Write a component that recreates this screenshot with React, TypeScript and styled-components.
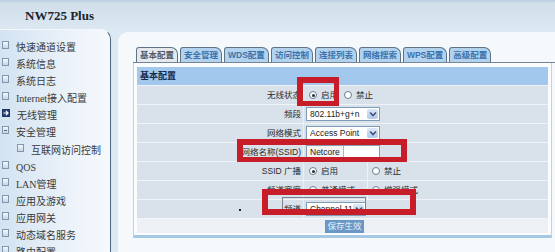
import React from "react";
import styled, { createGlobalStyle, css } from "styled-components";

const GlobalStyle = createGlobalStyle`
  html, body { margin: 0; padding: 0; }
  body {
    width: 555px;
    height: 252px;
    overflow: hidden;
    background: #dce8f2;
    font-family: "Liberation Sans", "Noto Sans CJK SC", sans-serif;
  }
  * { box-sizing: border-box; }
`;

const Page = styled.div`
  position: relative;
  width: 555px;
  height: 252px;
  overflow: hidden;
  background: #dce8f2;
  display: flex;
  flex-direction: column;
`;

const Header = styled.header`
  flex: none;
  height: 29px;
  padding: 9px 0 0 25px;
  background: linear-gradient(#b7cde1 0, #d1dfeb 3px, #dbe7f1 100%);
`;

const Brand = styled.div`
  font: bold 13px/13px "Liberation Serif", serif;
  color: #1b2530;
`;

const Body = styled.div`
  flex: 1;
  min-height: 0;
  display: flex;
  gap: 7px;
`;

const Sidebar = styled.nav`
  flex: none;
  width: 111px;
  padding: 9px 0 0 2px;
  background: linear-gradient(to right, #d3e3f2, #eef4fa 70%, #f6f9fc);
  border-top: 1px solid #f3f7fb;
  border-right: 1px solid #4d6580;
  border-top-right-radius: 10px;
`;

const MenuItem = styled.div<{ $indent?: boolean }>`
  display: flex;
  align-items: flex-start;
  height: 17.1px;
  padding-left: ${(p) => (p.$indent ? "15px" : "0")};
  font: 10px/17px "Liberation Serif", "Noto Sans CJK SC", serif;
  color: #3a3a3a;
  white-space: nowrap;
`;

const MenuIcon = styled.span<{ $kind: "box" | "minus" | "arrow" }>`
  flex: none;
  position: relative;
  width: 7px;
  height: 8px;
  margin: 2px 7px 0 0;
  border: 1px solid #8297ae;
  background: linear-gradient(#f6f9fc, #c4d5e6);
  ${(p) =>
    p.$kind === "minus" &&
    css`
      &::after {
        content: "";
        position: absolute;
        left: 1px;
        right: 1px;
        top: 2.5px;
        height: 1px;
        background: #55687d;
      }
    `}
  ${(p) =>
    p.$kind === "arrow" &&
    css`
      width: 8px;
      height: 8px;
      border-color: #1e3466;
      background: #24417c;
    `}
  svg {
    position: absolute;
    left: 0;
    top: 0;
  }
`;

const Main = styled.main`
  flex: 1;
  margin-top: 3px;
  padding: 15px 0 0 15px;
  background: #f6f9fc;
  border-top-left-radius: 10px;
`;

const TabBar = styled.div`
  display: flex;
  gap: 2px;
  height: 16px;
  padding-left: 3px;
  border-bottom: 1px solid #74879a;
`;

const Tab = styled.div<{ $active?: boolean }>`
  height: 15px;
  padding: 0 3px;
  font: bold 8.5px/14px "Liberation Sans", "Noto Sans CJK SC", sans-serif;
  white-space: nowrap;
  border: 1px solid #5f7387;
  border-bottom: none;
  border-radius: 3px 7px 0 0;
  background: ${(p) => (p.$active ? "#e4e9ee" : "#b3d2ee")};
  color: ${(p) => (p.$active ? "#505a66" : "#3a72ad")};
`;

const Panel = styled.section`
  width: 419px;
  padding: 4px 3px 2px 3px;
  background: #fbfcfd;
  border: 1px solid #c3d2de;
  border-top: none;
  border-bottom: 3px solid #a6c8e2;
`;

const PanelHeader = styled.div`
  height: 18px;
  padding-left: 3px;
  background: #a2c9ed;
  font: bold 9px/18px "Liberation Sans", "Noto Sans CJK SC", sans-serif;
  color: #14284a;
`;

const Row = styled.div`
  display: grid;
  grid-template-columns: 166px 1fr;
  height: 19px;
  border-top: 1px solid #eff3f7;
  background: #d9e2ea;
`;

const Label = styled.div`
  padding-right: 2px;
  text-align: right;
  font: 8.5px/18px "Liberation Sans", "Noto Sans CJK SC", sans-serif;
  color: #2b2b2b;
  white-space: nowrap;
`;

const Value = styled.div`
  display: flex;
  align-items: center;
  padding-left: 2px;
  border-left: 1px solid #e9eff4;
  font: 8.5px/18px "Liberation Sans", "Noto Sans CJK SC", sans-serif;
  color: #2b2b2b;
  white-space: nowrap;
`;

const SplitCell = styled.div<{ $width?: number; $divider?: boolean }>`
  display: flex;
  align-items: center;
  height: 100%;
  width: ${(p) => (p.$width ? `${p.$width}px` : "auto")};
  flex: ${(p) => (p.$width ? "none" : "1")};
  padding-left: ${(p) => (p.$divider ? "1px" : "0")};
  border-left: ${(p) => (p.$divider ? "1px solid #eff3f7" : "none")};
`;

const Radio = styled.span<{ $checked?: boolean }>`
  position: relative;
  flex: none;
  width: 8px;
  height: 8px;
  margin-left: 3px;
  border: 1px solid #6b7d90;
  border-radius: 50%;
  background: #fff;
  ${(p) =>
    p.$checked &&
    css`
      &::after {
        content: "";
        position: absolute;
        left: 1.5px;
        top: 1.5px;
        width: 3px;
        height: 3px;
        border-radius: 50%;
        background: #2a2a2a;
      }
    `}
`;

const RadioText = styled.span`
  margin: 0 3px 0 4px;
`;

const Select = styled.div<{ $width: number }>`
  display: flex;
  align-items: center;
  justify-content: space-between;
  width: ${(p) => p.$width}px;
  height: 14px;
  padding: 0 1px 0 3px;
  border: 1px solid #7f9db9;
  background: #fff;
  font: 8.5px/12px "Liberation Sans", sans-serif;
  color: #222;
`;

const SelectArrow = styled.span`
  display: flex;
  align-items: center;
  justify-content: center;
  width: 11px;
  height: 10px;
  border-radius: 2px;
  background: linear-gradient(#dde8f8, #b2c8eb);
`;

const TextInput = styled.div`
  display: flex;
  width: 74px;
  height: 14px;
  border: 1px solid #8b9bae;
  background: #fff;
`;

const InputValue = styled.span`
  padding: 0 3px;
  border-right: 1px solid #aab6c3;
  background: #f4f4f4;
  font: 8.5px/12px "Liberation Sans", sans-serif;
  color: #222;
`;

const ButtonRow = styled.div`
  display: flex;
  justify-content: center;
  align-items: center;
  height: 15px;
  padding-left: 4px;
  border-top: 1px solid #f3f6f9;
  background: #edf1f5;
`;

const SaveButton = styled.button`
  height: 13px;
  padding: 0 2px;
  border: none;
  background: #6a97c5;
  color: #e8f1fa;
  font: 8.5px/13px "Liberation Sans", "Noto Sans CJK SC", sans-serif;
`;

const RedBox = styled.div<{ $x: number; $y: number; $w: number; $h: number; $bw?: string }>`
  position: absolute;
  left: ${(p) => p.$x}px;
  top: ${(p) => p.$y}px;
  width: ${(p) => p.$w}px;
  height: ${(p) => p.$h}px;
  border: solid #c71d29;
  border-width: ${(p) => p.$bw ?? "6px"};
  pointer-events: none;
`;

const PasteFrame = styled.div`
  position: absolute;
  left: 282px;
  top: 197px;
  width: 84px;
  height: 14px;
  border: 1px solid #7b8189;
  border-bottom: none;
  pointer-events: none;
`;

const Speck = styled.div`
  position: absolute;
  left: 239px;
  top: 209px;
  width: 2px;
  height: 2px;
  background: #222;
`;

const Chevron = () => (
  <svg width="8" height="6" viewBox="0 0 8 6">
    <path d="M1 1.5 L4 4.5 L7 1.5" fill="none" stroke="#3d5478" strokeWidth="1.6" />
  </svg>
);

const ArrowGlyph = () => (
  <svg width="6" height="6" viewBox="0 0 6 6">
    <path d="M0.5 3 H4.5 M3 1 L5 3 L3 5" fill="none" stroke="#fff" strokeWidth="1.2" />
  </svg>
);

type MenuDef = { label: string; kind?: "box" | "minus" | "arrow"; indent?: boolean };

const menu: MenuDef[] = [
  { label: "快速通道设置" },
  { label: "系统信息" },
  { label: "系统日志" },
  { label: "Internet接入配置" },
  { label: "无线管理", kind: "arrow" },
  { label: "安全管理", kind: "minus" },
  { label: "互联网访问控制", indent: true },
  { label: "QOS" },
  { label: "LAN管理" },
  { label: "应用及游戏" },
  { label: "应用网关" },
  { label: "动态域名服务" },
  { label: "路由配置" },
];

const tabs = ["基本配置", "安全管理", "WDS配置", "访问控制", "连接列表", "网络搜索", "WPS配置", "高级配置"];

export default function App() {
  return (
    <>
      <GlobalStyle />
      <Page>
        <Header>
          <Brand>NW725 Plus</Brand>
        </Header>
        <Body>
          <Sidebar>
            {menu.map((m) => (
              <MenuItem key={m.label} $indent={m.indent}>
                <MenuIcon $kind={m.kind ?? "box"}>{m.kind === "arrow" && <ArrowGlyph />}</MenuIcon>
                {m.label}
              </MenuItem>
            ))}
          </Sidebar>
          <Main>
            <TabBar>
              {tabs.map((t, i) => (
                <Tab key={t} $active={i === 0}>
                  {t}
                </Tab>
              ))}
            </TabBar>
            <Panel>
              <PanelHeader>基本配置</PanelHeader>
              <Row>
                <Label>无线状态</Label>
                <Value>
                  <Radio $checked />
                  <RadioText>启用</RadioText>
                  <Radio />
                  <RadioText>禁止</RadioText>
                </Value>
              </Row>
              <Row>
                <Label>频段</Label>
                <Value>
                  <Select $width={74}>
                    802.11b+g+n
                    <SelectArrow>
                      <Chevron />
                    </SelectArrow>
                  </Select>
                </Value>
              </Row>
              <Row>
                <Label>网络模式</Label>
                <Value>
                  <Select $width={74}>
                    Access Point
                    <SelectArrow>
                      <Chevron />
                    </SelectArrow>
                  </Select>
                </Value>
              </Row>
              <Row>
                <Label>网络名称(SSID)</Label>
                <Value>
                  <TextInput>
                    <InputValue>Netcore</InputValue>
                  </TextInput>
                </Value>
              </Row>
              <Row>
                <Label>SSID 广播</Label>
                <Value>
                  <SplitCell $width={61}>
                    <Radio $checked />
                    <RadioText>启用</RadioText>
                  </SplitCell>
                  <SplitCell $divider>
                    <Radio />
                    <RadioText>禁止</RadioText>
                  </SplitCell>
                </Value>
              </Row>
              <Row>
                <Label>频道宽度</Label>
                <Value>
                  <SplitCell $width={61}>
                    <Radio $checked />
                    <RadioText>普通模式</RadioText>
                  </SplitCell>
                  <SplitCell $divider>
                    <Radio />
                    <RadioText>增强模式</RadioText>
                  </SplitCell>
                </Value>
              </Row>
              <Row>
                <Label>频道</Label>
                <Value>
                  <Select $width={60}>
                    Channel 11
                    <SelectArrow>
                      <Chevron />
                    </SelectArrow>
                  </Select>
                </Value>
              </Row>
              <ButtonRow>
                <SaveButton>保存生效</SaveButton>
              </ButtonRow>
            </Panel>
          </Main>
        </Body>
        <PasteFrame />
        <Speck />
        <RedBox $x={297} $y={77} $w={42} $h={29} $bw="6px 5px 5px 6px" />
        <RedBox $x={237} $y={139} $w={170} $h={23} $bw="6px 6px 5px 6px" />
        <RedBox $x={262} $y={189} $w={154} $h={26} />
      </Page>
    </>
  );
}
